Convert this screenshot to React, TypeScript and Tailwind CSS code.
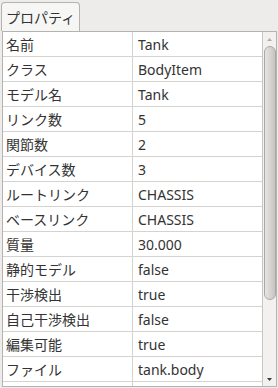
const ROWS: [string, string][] = [
  ["名前", "Tank"],
  ["クラス", "BodyItem"],
  ["モデル名", "Tank"],
  ["リンク数", "5"],
  ["関節数", "2"],
  ["デバイス数", "3"],
  ["ルートリンク", "CHASSIS"],
  ["ベースリンク", "CHASSIS"],
  ["質量", "30.000"],
  ["静的モデル", "false"],
  ["干渉検出", "true"],
  ["自己干渉検出", "false"],
  ["編集可能", "true"],
  ["ファイル", "tank.body"],
  ["", ""],
];

const font = {
  fontFamily: '"Noto Sans", "Noto Sans CJK JP", sans-serif',
};

export default function App() {
  return (
    <div
      className="w-[278px] h-[388px] bg-[#edeceb] overflow-hidden text-[14px] text-[#333333]"
      style={font}
    >
      {/* tab bar */}
      <div className="h-[31px] flex items-end pl-[1px]">
        <div className="w-[79px] h-[29px] bg-[#f6f6f5] border border-b-0 border-[#b4b3b0] rounded-t-[4px] flex items-center pl-[4px] whitespace-nowrap">
          プロパティ
        </div>
      </div>

      {/* panel */}
      <div className="ml-[2px] mr-[1px] h-[356px] border border-[#b4b3b0] bg-white flex overflow-hidden">
        <div className="flex-1 flex flex-col overflow-hidden">
          {ROWS.map(([label, value], i) => (
            <div key={i} className="h-[25px] shrink-0 flex border-b border-[#d4d3d0]">
              <div className="w-[130px] shrink-0 border-r border-[#d4d3d0] pl-[3px] flex items-center whitespace-nowrap">
                {label}
              </div>
              <div className="flex-1 pl-[5px] flex items-center whitespace-nowrap">{value}</div>
            </div>
          ))}
        </div>

        {/* scrollbar */}
        <div className="w-[14px] shrink-0 border-l border-[#c8c7c4] bg-[#f2f1f0] flex flex-col items-center">
          <div className="h-[14px] w-full flex items-center justify-center">
            <svg width="5" height="3" viewBox="0 0 5 3">
              <path d="M0 3 L2.5 0 L5 3 Z" fill="#b0afac" />
            </svg>
          </div>
          <div className="w-[12px] h-[254px] rounded-[6px] border border-[#a9a8a5] bg-gradient-to-r from-[#e6e5e3] via-[#d6d5d2] to-[#c6c5c2]" />
          <div className="flex-1" />
          <div className="h-[14px] w-full flex items-center justify-center">
            <svg width="5" height="3" viewBox="0 0 5 3">
              <path d="M0 0 L5 0 L2.5 3 Z" fill="#3c3c3c" />
            </svg>
          </div>
        </div>
      </div>
    </div>
  );
}
